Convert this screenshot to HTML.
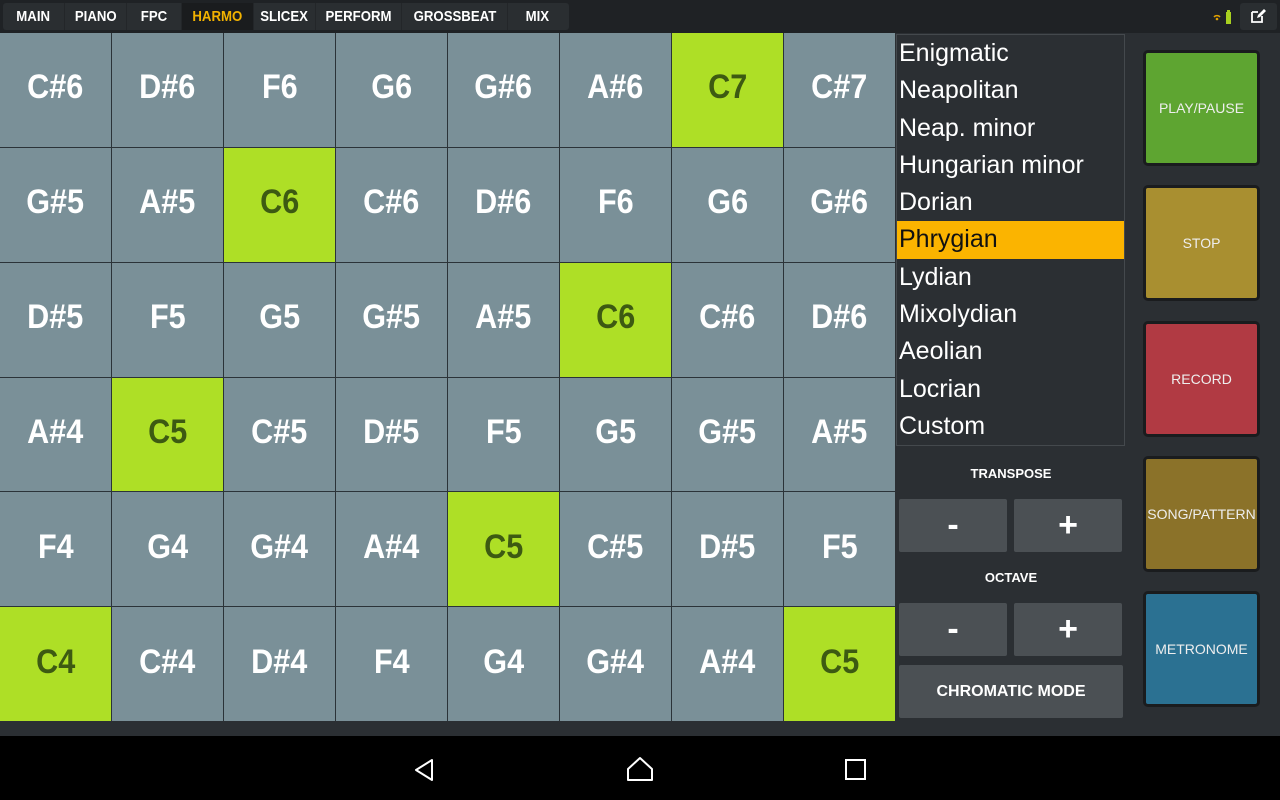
<!DOCTYPE html>
<html><head><meta charset="utf-8"><style>
*{margin:0;padding:0;box-sizing:border-box}
body{width:1280px;height:800px;background:#2b2f33;font-family:"Liberation Sans",sans-serif;position:relative;overflow:hidden}
.top{position:absolute;left:0;top:0;width:1280px;height:33px;background:#1f2225}
.tabs{position:absolute;left:3px;top:3px;height:27px;width:566px;background:#2a2e31;border-radius:3px;display:flex}
.tabs div{color:#fff;font-weight:bold;font-size:15px;line-height:27px;text-align:center;border-right:1px solid #232629;white-space:nowrap}
.tabs div span{display:inline-block;transform:scaleX(.88)}
.tabs .on{color:#f2b200;background:#1a1c1e}
.grid{position:absolute;left:0;top:33px;width:895px;height:688px;display:grid;grid-template-columns:repeat(8,1fr);grid-template-rows:repeat(6,1fr);background:#2b3338;gap:1px}
.grid div{background:#7a9098;color:#fff;font-weight:bold;font-size:34px;display:flex;align-items:center;justify-content:center;padding-bottom:4px}
.grid div span{display:inline-block;transform:scaleX(.9)}
.grid div.g{background:#aedf26;color:#3d5a12}
.list{position:absolute;left:896px;top:34px;width:229px;height:412px;border:1px solid #44494d;background:#2b2f33}
.list div{height:37.3px;line-height:36px;color:#fff;font-size:25px;padding-left:2px}
.list .sel{background:#fbb400;color:#111}
.lbl{position:absolute;left:898px;width:226px;text-align:center;color:#fff;font-weight:bold;font-size:13px}
.b{position:absolute;background:#4b5054;color:#fff;font-weight:bold;display:flex;align-items:center;justify-content:center;border-radius:2px}
.pad{position:absolute;left:1143px;width:117px;height:116px;border:3px solid #1a1c1e;border-radius:5px;color:#eee;font-size:14px;display:flex;align-items:center;justify-content:center}
.nav{position:absolute;left:0;top:736px;width:1280px;height:64px;background:#000}
</style></head><body>
<div class="top">
<div class="tabs">
<div style="width:62px"><span>MAIN</span></div><div style="width:62px"><span>PIANO</span></div><div style="width:55px"><span>FPC</span></div><div class="on" style="width:72px"><span>HARMO</span></div><div style="width:62px"><span>SLICEX</span></div><div style="width:86px"><span>PERFORM</span></div><div style="width:106px"><span>GROSSBEAT</span></div><div style="width:59px;border:none"><span>MIX</span></div>
</div>
<svg style="position:absolute;left:1212px;top:10px" width="26" height="16"><path d="M2 7a4 4 0 0 1 6 0" stroke="#e0a000" stroke-width="1.5" fill="none"/><circle cx="5" cy="9" r="1.3" fill="#e0a000"/><rect x="14" y="2" width="5" height="12" fill="#a8d020"/><rect x="15" y="0" width="3" height="2" fill="#a8d020"/></svg>
<div style="position:absolute;left:1240px;top:3px;width:37px;height:27px;background:#2a2e31;border-radius:3px"></div>
<svg style="position:absolute;left:1250px;top:8px" width="16" height="16"><path d="M2 4h6M2 4v10h10v-6" stroke="#fff" stroke-width="1.8" fill="none"/><path d="M7 10l1-3 6-6 2 2-6 6z" fill="#fff"/></svg>
</div>
<div class="grid">
<div><span>C#6</span></div><div><span>D#6</span></div><div><span>F6</span></div><div><span>G6</span></div><div><span>G#6</span></div><div><span>A#6</span></div><div class="g"><span>C7</span></div><div><span>C#7</span></div>
<div><span>G#5</span></div><div><span>A#5</span></div><div class="g"><span>C6</span></div><div><span>C#6</span></div><div><span>D#6</span></div><div><span>F6</span></div><div><span>G6</span></div><div><span>G#6</span></div>
<div><span>D#5</span></div><div><span>F5</span></div><div><span>G5</span></div><div><span>G#5</span></div><div><span>A#5</span></div><div class="g"><span>C6</span></div><div><span>C#6</span></div><div><span>D#6</span></div>
<div><span>A#4</span></div><div class="g"><span>C5</span></div><div><span>C#5</span></div><div><span>D#5</span></div><div><span>F5</span></div><div><span>G5</span></div><div><span>G#5</span></div><div><span>A#5</span></div>
<div><span>F4</span></div><div><span>G4</span></div><div><span>G#4</span></div><div><span>A#4</span></div><div class="g"><span>C5</span></div><div><span>C#5</span></div><div><span>D#5</span></div><div><span>F5</span></div>
<div class="g"><span>C4</span></div><div><span>C#4</span></div><div><span>D#4</span></div><div><span>F4</span></div><div><span>G4</span></div><div><span>G#4</span></div><div><span>A#4</span></div><div class="g"><span>C5</span></div>
</div>
<div class="list">
<div>Enigmatic</div><div>Neapolitan</div><div>Neap. minor</div><div>Hungarian minor</div><div>Dorian</div><div class="sel">Phrygian</div><div>Lydian</div><div>Mixolydian</div><div>Aeolian</div><div>Locrian</div><div>Custom</div>
</div>
<div class="lbl" style="top:466px">TRANSPOSE</div>
<div class="b" style="left:899px;top:499px;width:108px;height:53px;font-size:34px">-</div>
<div class="b" style="left:1014px;top:499px;width:108px;height:53px;font-size:34px">+</div>
<div class="lbl" style="top:570px">OCTAVE</div>
<div class="b" style="left:899px;top:603px;width:108px;height:53px;font-size:34px">-</div>
<div class="b" style="left:1014px;top:603px;width:108px;height:53px;font-size:34px">+</div>
<div class="b" style="left:899px;top:665px;width:224px;height:53px;font-size:16px">CHROMATIC MODE</div>
<div class="pad" style="top:50px;background:#5ea531">PLAY/PAUSE</div>
<div class="pad" style="top:185px;background:#a98f30">STOP</div>
<div class="pad" style="top:321px;background:#b13a43">RECORD</div>
<div class="pad" style="top:456px;background:#8b7229">SONG/PATTERN</div>
<div class="pad" style="top:591px;background:#2b7192">METRONOME</div>
<div class="nav">
<svg style="position:absolute;left:412px;top:22px" width="24" height="24"><path d="M20 2L4 12l16 10z" stroke="#fff" stroke-width="2" fill="none" stroke-linejoin="round"/></svg>
<svg style="position:absolute;left:626px;top:20px" width="28" height="26"><path d="M2 13L14 2l12 11v11H2z" stroke="#fff" stroke-width="2" fill="none" stroke-linejoin="round"/></svg>
<svg style="position:absolute;left:845px;top:23px" width="22" height="22"><rect x="1" y="1" width="19" height="19" stroke="#fff" stroke-width="2" fill="none"/></svg>
</div>
</body></html>
